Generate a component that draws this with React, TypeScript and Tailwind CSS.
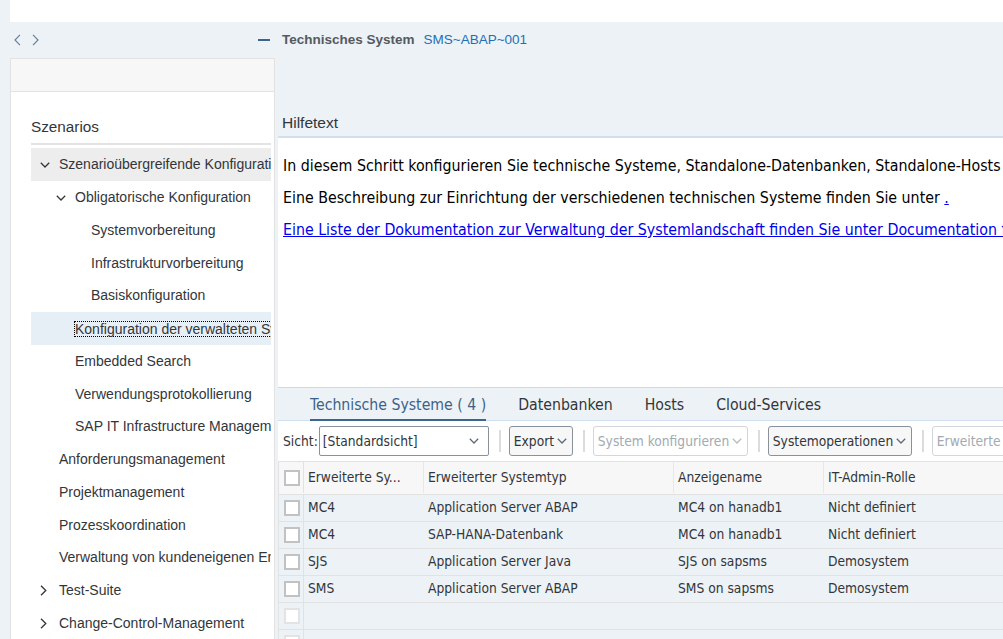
type TreeItem = {
  label: string
  level: 1 | 2 | 3
  chevron?: 'down' | 'right'
  tone?: 'expanded' | 'selected'
}

const tree: TreeItem[] = [
  { label: 'Szenarioübergreifende Konfiguration', level: 1, chevron: 'down', tone: 'expanded' },
  { label: 'Obligatorische Konfiguration', level: 2, chevron: 'down' },
  { label: 'Systemvorbereitung', level: 3 },
  { label: 'Infrastrukturvorbereitung', level: 3 },
  { label: 'Basiskonfiguration', level: 3 },
  { label: 'Konfiguration der verwalteten Systeme', level: 2, tone: 'selected' },
  { label: 'Embedded Search', level: 2 },
  { label: 'Verwendungsprotokollierung', level: 2 },
  { label: 'SAP IT Infrastructure Management', level: 2 },
  { label: 'Anforderungsmanagement', level: 1 },
  { label: 'Projektmanagement', level: 1 },
  { label: 'Prozesskoordination', level: 1 },
  { label: 'Verwaltung von kundeneigenen Entwicklungen', level: 1 },
  { label: 'Test-Suite', level: 1, chevron: 'right' },
  { label: 'Change-Control-Management', level: 1, chevron: 'right' },
]

const rows = [
  ['MC4', 'Application Server ABAP', 'MC4 on hanadb1', 'Nicht definiert'],
  ['MC4', 'SAP-HANA-Datenbank', 'MC4 on hanadb1', 'Nicht definiert'],
  ['SJS', 'Application Server Java', 'SJS on sapsms', 'Demosystem'],
  ['SMS', 'Application Server ABAP', 'SMS on sapsms', 'Demosystem'],
]

const levelPad = { 1: 'pl-[9px]', 2: 'pl-[25px]', 3: 'pl-[41px]' }

function ChevronDown({ className = 'stroke-[#32363a]' }: { className?: string }) {
  return (
    <svg width="10" height="6" viewBox="0 0 10 6" className={className} fill="none">
      <polyline points="0.8,0.8 5,5 9.2,0.8" strokeWidth="1.3" />
    </svg>
  )
}

function ChevronRight() {
  return (
    <svg width="7" height="11" viewBox="0 0 7 11" fill="none" className="stroke-[#32363a]">
      <polyline points="1,0.8 5.8,5.5 1,10.2" strokeWidth="1.3" />
    </svg>
  )
}

function Checkbox({ faint }: { faint?: boolean }) {
  return (
    <div
      className={
        faint
          ? 'w-[16px] h-[16px] border-2 border-[#e3e3e3] bg-white'
          : 'w-[16px] h-[16px] border-2 border-[#c2c2c2] bg-white'
      }
    />
  )
}

function Separator() {
  return <div className="ml-[10px] mr-[8px] w-[2px] h-[22px] bg-[#dcdcdc] shrink-0" />
}

export default function App() {
  return (
    <div className="w-[1003px] h-[639px] overflow-hidden bg-[#edf2f7] flex flex-col font-['Liberation_Sans',Arial,sans-serif] text-[#32363a]">
      {/* top white strip */}
      <div className="h-[22px] ml-[10px] bg-white shrink-0" />

      {/* nav row */}
      <div className="h-[36px] flex items-center shrink-0">
        <div className="w-[275px] flex items-center pl-[14px] pr-[5px]">
          <svg width="7" height="12" viewBox="0 0 7 12" fill="none" className="stroke-[#6a819a]">
            <polyline points="6,0.8 1,6 6,11.2" strokeWidth="1.2" />
          </svg>
          <svg width="7" height="12" viewBox="0 0 7 12" fill="none" className="ml-[11px] stroke-[#6a819a]">
            <polyline points="1,0.8 6,6 1,11.2" strokeWidth="1.2" />
          </svg>
          <div className="ml-auto w-[12px] h-[2px] bg-[#3b6590]" />
        </div>
        <div className="pl-[7px] flex items-baseline gap-[9px] whitespace-nowrap">
          <span className="font-bold text-[13.5px] text-[#555a5f]">Technisches System</span>
          <span className="text-[13.5px] text-[#1f6fb5]">SMS~ABAP~001</span>
        </div>
      </div>

      <div className="flex flex-1 min-h-0">
        {/* left tree panel */}
        <div className="ml-[10px] w-[265px] shrink-0 border-x border-t border-[#e2e2e2] bg-white flex flex-col">
          <div className="h-[33px] bg-[#f7f7f7] border-b border-[#e2e2e2] shrink-0" />
          <div className="pl-[20px] pr-[3px] overflow-hidden">
            <div className="mt-[24px] h-[22px] leading-[22px] text-[15.3px]">Szenarios</div>
            <div className="mt-[5px] h-[2px] bg-[#e3e3e3]" />
            <div className="mt-[3px]">
              {tree.map((t) => (
                <div
                  key={t.label}
                  className={
                    'h-[32.75px] flex items-center whitespace-nowrap overflow-hidden text-[14px] pt-[1px] ' +
                    levelPad[t.level] +
                    (t.tone === 'expanded' ? ' bg-[#ededed]' : t.tone === 'selected' ? ' bg-[#e6eef6]' : '')
                  }
                >
                  <div className="w-[10px] mr-[9px] shrink-0 flex items-center">
                    {t.chevron === 'down' && <ChevronDown />}
                    {t.chevron === 'right' && <ChevronRight />}
                  </div>
                  {t.tone === 'selected' ? (
                    <span className="border border-dotted border-black leading-[14px] -ml-[1px]">{t.label}</span>
                  ) : (
                    <span>{t.label}</span>
                  )}
                </div>
              ))}
            </div>
          </div>
        </div>

        {/* right content */}
        <div className="flex-1 min-w-0 pl-[3px] flex flex-col overflow-hidden">
          <div className="h-[50px] shrink-0" />
          <div className="h-[30px] flex items-center pl-[4px] pt-[1px] text-[15.5px] shrink-0 border-b-2 border-[#d1e0ee]">
            Hilfetext
          </div>
          <div className="h-[250px] shrink-0 bg-white border-b border-[#c9d9ea] pt-[12px] pl-[5px] leading-[32px] text-[15.8px] text-black whitespace-nowrap overflow-hidden font-['DejaVu_Sans_Condensed','DejaVu_Sans',sans-serif]">
            <div>In diesem Schritt konfigurieren Sie technische Systeme, Standalone-Datenbanken, Standalone-Hosts und Cloud-Services.</div>
            <div>
              Eine Beschreibung zur Einrichtung der verschiedenen technischen Systeme finden Sie unter{' '}
              <a className="text-[#0000ee] underline">.</a>
            </div>
            <div>
              <a className="text-[#0000ee] underline">
                Eine Liste der Dokumentation zur Verwaltung der Systemlandschaft finden Sie unter Documentation for Landscape Management.
              </a>
            </div>
          </div>

          {/* tabs */}
          <div className="h-[33px] shrink-0 flex items-stretch gap-[32px] pl-[32px] shadow-[inset_0_-1px_0_#d1deed] text-[15.7px] whitespace-nowrap font-['DejaVu_Sans_Condensed','DejaVu_Sans',sans-serif]">
            <div className="flex items-center pt-[1px] text-[#3c6288] shadow-[inset_0_-2px_0_#3a6690]">Technische Systeme ( 4 )</div>
            <div className="flex items-center pt-[1px]">Datenbanken</div>
            <div className="flex items-center pt-[1px]">Hosts</div>
            <div className="flex items-center pt-[1px]">Cloud-Services</div>
          </div>

          {/* toolbar */}
          <div className="h-[40px] shrink-0 bg-white flex items-center pl-[5px] whitespace-nowrap text-[13.7px] font-['DejaVu_Sans_Condensed','DejaVu_Sans',sans-serif]">
            <span className="mr-[1px]">Sicht:</span>
            <div className="w-[170px] h-[30px] shrink-0 border border-[#89919a] rounded-[2px] flex items-center pl-[3px] pr-[9px]">
              <span>[Standardsicht]</span>
              <ChevronDown className="ml-auto stroke-[#5b6b7b]" />
            </div>
            <Separator />
            <div className="h-[30px] w-[64px] shrink-0 border border-[#89919a] rounded-[3px] bg-[#f7f7f7] flex items-center gap-[3px] pl-[4px]">
              Export
              <ChevronDown className="stroke-[#5b6b7b]" />
            </div>
            <Separator />
            <div className="h-[30px] w-[155px] shrink-0 border border-[#d3d7db] rounded-[3px] flex items-center gap-[3px] pl-[4px] text-[#a2aab2]">
              System konfigurieren
              <ChevronDown className="stroke-[#b5bcc3]" />
            </div>
            <Separator />
            <div className="h-[30px] w-[144px] shrink-0 border border-[#89919a] rounded-[3px] bg-[#f7f7f7] flex items-center gap-[3px] pl-[4px]">
              Systemoperationen
              <ChevronDown className="stroke-[#5b6b7b]" />
            </div>
            <Separator />
            <div className="h-[30px] w-[160px] shrink-0 border border-[#d3d7db] rounded-[3px] flex items-center px-[4px] text-[#a2aab2]">
              Erweiterte Gruppierung
            </div>
          </div>

          {/* table */}
          <div className="border-t border-l border-[#e2e2e2] text-[13.7px] whitespace-nowrap font-['DejaVu_Sans_Condensed','DejaVu_Sans',sans-serif]">
            <div className="grid grid-cols-[25px_120px_250px_150px_1fr] h-[33px] pb-[1px] bg-[#f7f7f7] border-b border-[#e2e2e2]">
              <div className="flex items-center pl-[5px] border-r border-[#e2e2e2]">
                <Checkbox />
              </div>
              <div className="flex items-center pl-[4px] border-r border-[#e8e8e8]">Erweiterte Sy...</div>
              <div className="flex items-center pl-[4px] border-r border-[#e8e8e8]">Erweiterter Systemtyp</div>
              <div className="flex items-center pl-[4px] border-r border-[#e8e8e8]">Anzeigename</div>
              <div className="flex items-center pl-[4px]">IT-Admin-Rolle</div>
            </div>
            {rows.map((r, i) => (
              <div key={i} className="grid grid-cols-[25px_120px_250px_150px_1fr] h-[27px] border-b border-[#e2e2e2]">
                <div className="flex items-center pl-[5px] border-r border-[#e2e2e2]">
                  <Checkbox />
                </div>
                {r.map((c, j) => (
                  <div key={j} className="flex items-center pl-[4px] pb-[1px]">
                    {c}
                  </div>
                ))}
              </div>
            ))}
            {[0, 1].map((i) => (
              <div key={i} className="grid grid-cols-[25px_120px_250px_150px_1fr] h-[27px] border-b border-[#e2e2e2]">
                <div className="flex items-center pl-[5px] border-r border-[#e2e2e2]">
                  <Checkbox faint />
                </div>
                <div />
                <div />
                <div />
                <div />
              </div>
            ))}
          </div>
        </div>
      </div>
    </div>
  )
}
